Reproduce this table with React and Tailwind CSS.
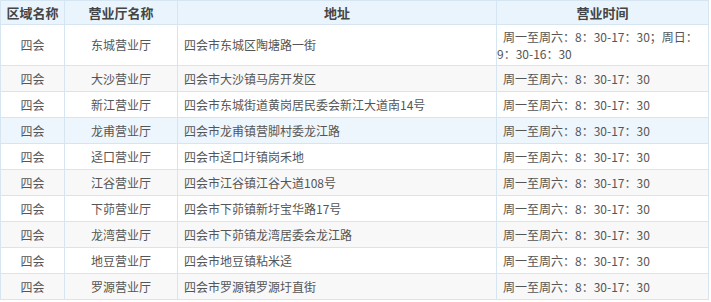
import React from "react";

const rows = [
  ["四会", "东城营业厅", "四会市东城区陶塘路一街", null],
  ["四会", "大沙营业厅", "四会市大沙镇马房开发区", "周一至周六：8：30-17：30"],
  ["四会", "新江营业厅", "四会市东城街道黄岗居民委会新江大道南14号", "周一至周六：8：30-17：30"],
  ["四会", "龙甫营业厅", "四会市龙甫镇营脚村委龙江路", "周一至周六：8：30-17：30"],
  ["四会", "迳口营业厅", "四会市迳口圩镇岗禾地", "周一至周六：8：30-17：30"],
  ["四会", "江谷营业厅", "四会市江谷镇江谷大道108号", "周一至周六：8：30-17：30"],
  ["四会", "下茆营业厅", "四会市下茆镇新圩宝华路17号", "周一至周六：8：30-17：30"],
  ["四会", "龙湾营业厅", "四会市下茆镇龙湾居委会龙江路", "周一至周六：8：30-17：30"],
  ["四会", "地豆营业厅", "四会市地豆镇粘米迳", "周一至周六：8：30-17：30"],
  ["四会", "罗源营业厅", "四会市罗源镇罗源圩直街", "周一至周六：8：30-17：30"],
];

const bgFor = (i) => {
  if (i === 3) return "bg-[#eef6fd]";
  return i % 2 === 1 ? "bg-[#f8f8f8]" : "bg-white";
};

export default function App() {
  return (
    <div className="w-[711px] h-[302px] bg-white overflow-hidden" style={{ fontFamily: '"Noto Sans CJK SC", "Noto Sans", sans-serif' }}>
      <table className="w-[709px] table-fixed border-collapse text-[12px] text-[#555]">
        <colgroup>
          <col className="w-[64px]" />
          <col className="w-[113px]" />
          <col className="w-[319px]" />
          <col className="w-[212px]" />
        </colgroup>
        <thead>
          <tr className="bg-[#eaf4fc] text-[#444] h-[24px]">
            <th className="border border-[#d6e5f2] font-bold text-[13px] leading-[16px] p-0 text-center">区域名称</th>
            <th className="border border-[#d6e5f2] font-bold text-[13px] leading-[16px] p-0 text-center">营业厅名称</th>
            <th className="border border-[#d6e5f2] font-bold text-[13px] leading-[16px] p-0 text-center">地址</th>
            <th className="border border-[#d6e5f2] font-bold text-[13px] leading-[16px] p-0 text-center">营业时间</th>
          </tr>
        </thead>
        <tbody>
          {rows.map((r, i) => (
            <tr key={i} className={`${bgFor(i)} ${i === 0 ? "h-[41px]" : "h-[26px]"}`}>
              <td className="border border-[#d6e5f2] p-0 text-center leading-[16px]">{r[0]}</td>
              <td className="border border-[#d6e5f2] p-0 text-center leading-[16px]">{r[1]}</td>
              <td className="border border-[#d6e5f2] p-0 pl-[6px] text-left leading-[16px] whitespace-nowrap">{r[2]}</td>
              <td className="border border-[#d6e5f2] p-0 text-left leading-[16px] whitespace-nowrap">
                {r[3] === null ? (
                  <div className="flex flex-col leading-[17px]">
                    <span className="pl-[6px]">周一至周六：8：30-17：30；周日：</span>
                    <span>9：30-16：30</span>
                  </div>
                ) : (
                  <span className="pl-[6px]">{r[3]}</span>
                )}
              </td>
            </tr>
          ))}
        </tbody>
      </table>
    </div>
  );
}
